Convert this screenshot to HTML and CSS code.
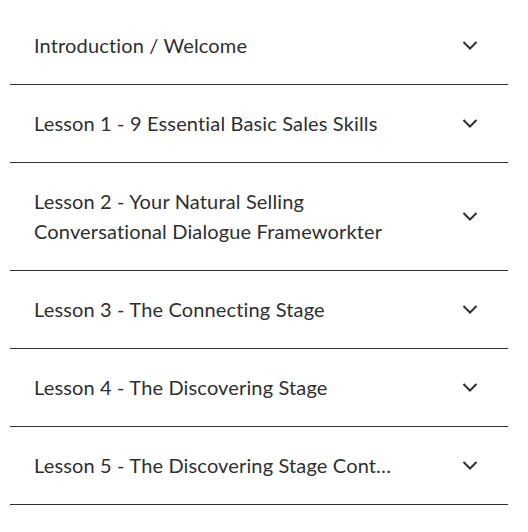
FILE: index.html
```html
<!DOCTYPE html>
<html lang="en">
<head>
  <meta charset="UTF-8" />
  <meta name="viewport" content="width=device-width, initial-scale=1.0"/>
  <title>Course Curriculum</title>
  <link rel="stylesheet" href="styles.css">
</head>
<body>
  <div class="curriculum">
    <div class="section">
      <span class="title">Introduction / Welcome</span>
      <span class="chevron"><svg width="24" height="24" viewBox="0 0 24 24"><path d="M5.5 9 12 15.5 18.5 9" fill="none" stroke="#2d2f31" stroke-width="2"/></svg></span>
    </div>
    <div class="section">
      <span class="title">Lesson 1 - 9 Essential Basic Sales Skills</span>
      <span class="chevron"><svg width="24" height="24" viewBox="0 0 24 24"><path d="M5.5 9 12 15.5 18.5 9" fill="none" stroke="#2d2f31" stroke-width="2"/></svg></span>
    </div>
    <div class="section">
      <span class="title">Lesson 2 - Your Natural Selling Conversational Dialogue Frameworkter</span>
      <span class="chevron"><svg width="24" height="24" viewBox="0 0 24 24"><path d="M5.5 9 12 15.5 18.5 9" fill="none" stroke="#2d2f31" stroke-width="2"/></svg></span>
    </div>
    <div class="section">
      <span class="title">Lesson 3 - The Connecting Stage</span>
      <span class="chevron"><svg width="24" height="24" viewBox="0 0 24 24"><path d="M5.5 9 12 15.5 18.5 9" fill="none" stroke="#2d2f31" stroke-width="2"/></svg></span>
    </div>
    <div class="section">
      <span class="title">Lesson 4 - The Discovering Stage</span>
      <span class="chevron"><svg width="24" height="24" viewBox="0 0 24 24"><path d="M5.5 9 12 15.5 18.5 9" fill="none" stroke="#2d2f31" stroke-width="2"/></svg></span>
    </div>
    <div class="section">
      <span class="title">Lesson 5 - The Discovering Stage Cont…</span>
      <span class="chevron"><svg width="24" height="24" viewBox="0 0 24 24"><path d="M5.5 9 12 15.5 18.5 9" fill="none" stroke="#2d2f31" stroke-width="2"/></svg></span>
    </div>
  </div>
</body>
</html>
```

FILE: styles.css
```css
body {
  margin: 0;
  background-color: #fff;
  font-family: Lato, "Liberation Sans", sans-serif;
  color: #2d2f31;
}
.curriculum {
  padding: 7px 20px 0 10px;
}
.section {
  display: flex;
  align-items: center;
  justify-content: space-between;
  padding: 23px 26px 24px 24px;
  border-bottom: 1px solid #2d2f31;
}
.title {
  font-size: 20px;
  line-height: 30px;
  letter-spacing: 0.15px;
  max-width: 380px;
}
.chevron {
  display: flex;
  width: 24px;
  height: 24px;
  flex-shrink: 0;
}
```
